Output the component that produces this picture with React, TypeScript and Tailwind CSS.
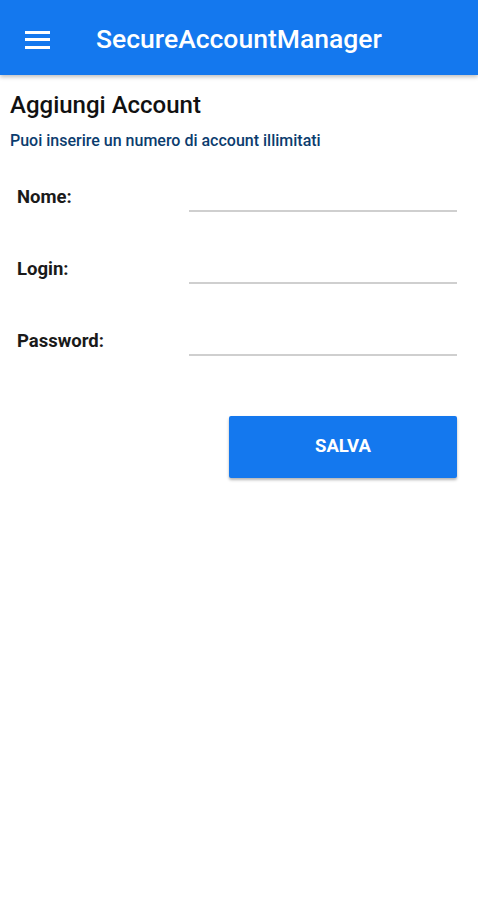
import { useState } from "react";

const Field = ({ label, type = "text" }: { label: string; type?: string }) => {
  const [value, setValue] = useState<string>("");
  return (
    <div className="flex h-[72px] items-start">
      <label className="w-[189px] pl-[17px] pt-[6px] text-[18.5px] font-bold leading-[22px] text-[#1a1a1a]">
        {label}
      </label>
      <input
        type={type}
        value={value}
        onChange={(e) => setValue(e.target.value)}
        className="mt-[4px] h-[28px] w-[268px] border-b-2 border-[#cfcfcf] bg-transparent text-[16px] outline-none"
      />
    </div>
  );
};

export default function App() {
  return (
    <div className="min-h-[900px] w-[478px] bg-white font-['Roboto',sans-serif]">
      <header className="flex h-[75px] items-center bg-[#1478ee] pt-[4px] shadow-[0_2px_4px_rgba(0,0,0,0.25)]">
        <button className="ml-[25px] flex h-[18px] w-[25px] flex-col justify-between">
          <span className="block h-[3px] w-full bg-white" />
          <span className="block h-[3px] w-full bg-white" />
          <span className="block h-[3px] w-full bg-white" />
        </button>
        <h1 className="ml-[46px] text-[26.5px] font-medium leading-none text-white">
          SecureAccountManager
        </h1>
      </header>

      <main className="pt-[16px]">
        <h2 className="pl-[10px] text-[24px] font-medium leading-[28px] text-[#111]">
          Aggiungi Account
        </h2>
        <p className="mt-[12px] pl-[10px] text-[16px] font-medium leading-[20px] text-[#0b3c6e]">
          Puoi inserire un numero di account illimitati
        </p>

        <div className="mt-[29px]">
          <Field label="Nome:" />
          <Field label="Login:" />
          <Field label="Password:" type="password" />
        </div>

        <div className="mt-[20px] flex justify-end pr-[21px]">
          <button className="h-[62px] w-[228px] rounded-[2px] bg-[#1478ee] text-[18.5px] font-bold text-white shadow-[0_2px_3px_rgba(0,0,0,0.3)]">
            SALVA
          </button>
        </div>
      </main>
    </div>
  );
}
